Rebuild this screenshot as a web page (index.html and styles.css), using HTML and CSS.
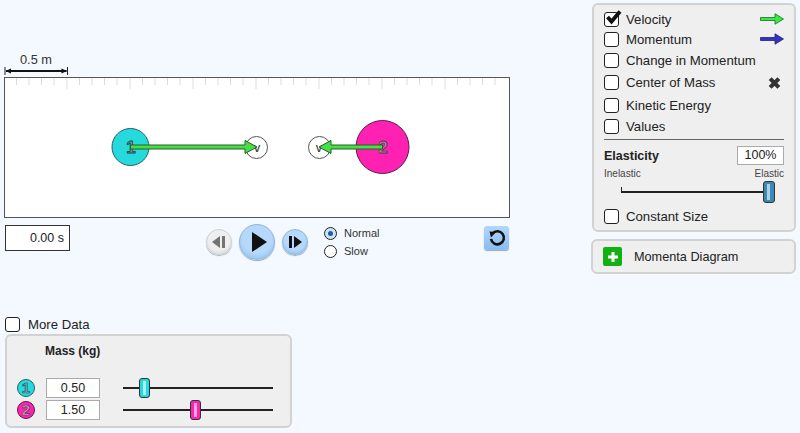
FILE: index.html
```html
<!DOCTYPE html>
<html lang="en">
<head>
<meta charset="utf-8">
<title>Collision Lab</title>
<link rel="stylesheet" href="styles.css">
</head>
<body>
<div class="app">
  <main class="left">
    <div class="scale">
      <span class="scale-label">0.5 m</span>
      <svg class="scale-bar" width="66" height="10" viewBox="0 0 66 10">
        <path d="M1 1V9M63.500 1V9" stroke="#222" stroke-width="1" fill="none"/>
        <path d="M2 5H62.500" stroke="#111" stroke-width="2" fill="none"/>
        <path d="M1.500 5L7 2.500V7.500ZM63 5L57.500 2.500V7.500Z" fill="#111"/>
      </svg>
    </div>
    <svg class="stage" width="506" height="141" viewBox="0 0 506 141">
      <rect x="0.500" y="0.500" width="505" height="140" fill="#fff" stroke="#555"/>
      <path id="ticks" stroke="#ddd" fill="none" d="M12.500 1V8M25 1V8M37.500 1V8M50 1V8M63 1V12M75.500 1V8M88 1V8M100.500 1V8M113 1V8M126 1V12M138.500 1V8M151 1V8M163.500 1V8M176 1V8M189 1V12M201.500 1V8M214 1V8M226.500 1V8M239 1V8M252 1V12M264.500 1V8M277 1V8M289.500 1V8M302 1V8M315 1V12M327.500 1V8M340 1V8M352.500 1V8M365 1V8M378 1V12M390.500 1V8M403 1V8M415.500 1V8M428 1V8M441 1V12M453.500 1V8M466 1V8M478.500 1V8M491 1V8"/>
      <circle cx="126.500" cy="70" r="18.500" fill="#26d9dd" stroke="#24606a"/>
      <text class="ball-num ball-num-a" x="127" y="76">1</text>
      <circle cx="378.500" cy="70" r="26.500" fill="#ff22b2" stroke="#5e1a48"/>
      <text class="ball-num ball-num-b" x="379" y="76">2</text>
      <circle cx="252.500" cy="70.500" r="11" fill="#fff" stroke="#555"/>
      <text class="v-label" x="253" y="75">v</text>
      <circle cx="315.500" cy="70.500" r="11" fill="#fff" stroke="#555"/>
      <text class="v-label" x="315" y="75">v</text>
      <path d="M126.500 68H241V63.500L253 70L241 76.500V72H126.500Z" fill="#44e044" stroke="#2a5a2a" stroke-width="1"/>
      <path d="M378.500 68H327V63.500L315 70L327 76.500V72H378.500Z" fill="#44e044" stroke="#2a5a2a" stroke-width="1"/>
    </svg>
    <div class="controls-row">
      <output class="time">0.00 s</output>
      <div class="transport">
        <button class="round step disabled" aria-label="Step back">
          <svg width="14" height="12" viewBox="0 0 14 12"><path d="M8 0V12L0 6Z M10 0H13V12H10Z" fill="#666"/></svg>
        </button>
        <button class="round play" aria-label="Play">
          <svg width="16" height="20" viewBox="0 0 16 20"><path d="M1 0L16 10L1 20Z" fill="#111"/></svg>
        </button>
        <button class="round step" aria-label="Step forward">
          <svg width="14" height="12" viewBox="0 0 14 12"><path d="M1 0H4V12H1Z M6 0L14 6L6 12Z" fill="#111"/></svg>
        </button>
      </div>
      <div class="speed">
        <label class="radio-row"><span class="radio on"></span>Normal</label>
        <label class="radio-row"><span class="radio"></span>Slow</label>
      </div>
      <button class="reset" aria-label="Reset">
        <svg width="18" height="18" viewBox="0 0 18 18"><path d="M4.500 4.500A6.500 6.500 0 1 1 3 10" fill="none" stroke="#111" stroke-width="2.600"/><path d="M1.500 2.500L8 3L3 8.500Z" fill="#111"/></svg>
      </button>
    </div>
    <label class="check-row more-data"><span class="box"></span>More Data</label>
    <section class="panel mass-panel">
      <div class="mass-title">Mass (kg)</div>
      <div class="mass-rows">
        <div class="mass-row">
          <svg class="badge" width="20" height="20" viewBox="0 0 20 20"><circle cx="10" cy="10" r="8.500" fill="#26d9dd" stroke="#24606a"/><text class="badge-num badge-a" x="10" y="15">1</text></svg>
          <output class="value mass-value">0.50</output>
          <div class="slider mass-slider"><span class="thumb thumb-a thumb-m1"></span></div>
        </div>
        <div class="mass-row">
          <svg class="badge" width="20" height="20" viewBox="0 0 20 20"><circle cx="10" cy="10" r="8.500" fill="#ff22b2" stroke="#5e1a48"/><text class="badge-num badge-b" x="10" y="15">2</text></svg>
          <output class="value mass-value">1.50</output>
          <div class="slider mass-slider"><span class="thumb thumb-b thumb-m2"></span></div>
        </div>
      </div>
    </section>
  </main>
  <aside class="side">
    <section class="panel options">
      <label class="check-row opt opt-1"><span class="box checked"><svg width="17" height="15" viewBox="0 0 17 15"><path d="M2.500 7L6.500 11.500L15 1.500" fill="none" stroke="#111" stroke-width="3.800"/></svg></span>Velocity
        <svg class="opt-icon" width="24" height="12" viewBox="0 0 24 12"><path d="M0.500 4.500H15V0.800L23.500 6L15 11.200V7.500H0.500Z" fill="#33ee44" stroke="#226622" stroke-width="0.800"/></svg></label>
      <label class="check-row opt opt-2"><span class="box"></span>Momentum
        <svg class="opt-icon" width="24" height="12" viewBox="0 0 24 12"><path d="M0.500 4.500H15V0.800L23.500 6L15 11.200V7.500H0.500Z" fill="#3333cc" stroke="#222266" stroke-width="0.800"/></svg></label>
      <label class="check-row opt opt-3"><span class="box"></span>Change in Momentum</label>
      <label class="check-row opt opt-4"><span class="box"></span>Center of Mass
        <svg class="opt-icon opt-x" width="13" height="13" viewBox="0 0 12 12"><path d="M2 2L10 10M10 2L2 10" stroke="#333" stroke-width="3.800" fill="none"/></svg></label>
      <label class="check-row opt opt-5"><span class="box"></span>Kinetic Energy</label>
      <label class="check-row opt opt-6"><span class="box"></span>Values</label>
      <hr class="rule">
      <div class="elastic-head"><strong>Elasticity</strong><output class="value pct">100%</output></div>
      <div class="elastic-labels"><span>Inelastic</span><span>Elastic</span></div>
      <div class="slider el-slider"><span class="end-tick"></span><span class="thumb thumb-el"></span></div>
      <label class="check-row const"><span class="box"></span>Constant Size</label>
    </section>
    <section class="panel diagram">
      <span class="plus"><svg width="12" height="12" viewBox="0 0 12 12"><path d="M6 1V11M1 6H11" stroke="#fff" stroke-width="3"/></svg></span>
      <span class="diagram-label">Momenta Diagram</span>
    </section>
  </aside>
</div>
</body>
</html>
```
FILE: styles.css
```css
* { box-sizing: border-box; }
html, body { margin: 0; height: 100%; }
body {
  background: #f4f9ff;
  color: #222;
  font-family: "Liberation Sans", Arial, sans-serif;
  font-size: 13.2px;
  overflow: hidden;
}
button { padding: 0; border: 0; font: inherit; }
.app {
  display: flex;
  justify-content: space-between;
  width: 800px;
  height: 433px;
  padding: 0 4px 0 4px;
}
.left { width: 506px; padding-top: 52px; }
.scale {
  display: flex;
  flex-direction: column;
  height: 25px;
  width: 66px;
}
.scale-label { width: 64px; text-align: center; font-size: 12.800px; line-height: 14px; margin-top: 1px; margin-bottom: -1px; color: #333; }
.scale-bar { display: block; margin-top: 0; }
.stage { display: block; }
.ball-num { font-size: 17px; font-weight: bold; text-anchor: middle; stroke-width: 0.8px; }
.ball-num-a { fill: #6a9fa8; stroke: #244; }
.ball-num-b { fill: #d77ab5; stroke: #444; }
.v-label { font-size: 13px; text-anchor: middle; fill: #333; }
.controls-row {
  position: relative;
  display: flex;
  align-items: flex-start;
  height: 92px;
  padding-top: 7px;
}
.time {
  width: 65px;
  height: 26px;
  padding-right: 5px;
  margin-left: 1px;
  border: 1px solid #333;
  background: #fff;
  font-size: 12.500px;
  line-height: 24px;
  text-align: right;
}
.transport { display: flex; align-items: center; gap: 7px; margin-left: 136px; margin-top: -1px; }
.round {
  display: flex;
  align-items: center;
  justify-content: center;
  border-radius: 50%;
  background: radial-gradient(circle at 50% 40%, #b5d8fb 0 55%, #7fb4ea 100%);
  border: 1px solid #8fb6dc;
  box-shadow: 0 1px 1px #9ab;
}
.step { width: 26px; height: 26px; }
.play { width: 36px; height: 36px; padding-left: 3px; }
.disabled { background: radial-gradient(circle at 50% 40%, #eee 0 55%, #ccc 100%); border-color: #ccc; opacity: 0.9; }
.speed { display: flex; flex-direction: column; gap: 4px; margin-left: 16px; margin-top: 1px; font-size: 11px; }
.radio-row { display: flex; align-items: center; gap: 7px; height: 14px; color: #333; }
.radio { position: relative; width: 13px; height: 13px; border: 1px solid #222; border-radius: 50%; background: #fff; }
.radio.on { background: #cfe3f8; }
.radio.on::after {
  content: "";
  position: absolute;
  inset: 3px;
  border-radius: 50%;
  background: #1f5f9f;
}
.reset {
  display: flex;
  align-items: center;
  justify-content: center;
  width: 25px;
  height: 24px;
  margin-left: auto;
  margin-right: 1px;
  margin-top: 1px;
  border-radius: 3px;
  background: linear-gradient(#b3d6fa, #88bcf0);
  box-shadow: 0 1px 1px #9ab;
}
.check-row { display: flex; align-items: center; }
.box {
  display: block;
  position: relative;
  flex: none;
  width: 15px;
  height: 15px;
  margin-right: 7px;
  border: 1px solid #222;
  border-radius: 3px;
  background: #fff;
}
.box svg { position: absolute; left: 0; top: -3px; }
.more-data { margin-top: 6px; margin-left: 1px; height: 16px; }
.more-data .box { margin-right: 8px; }
.panel {
  background: #efefef;
  border: 2px solid #d2d2d2;
  border-radius: 6px;
}
.mass-panel { width: 287px; height: 94px; margin-top: 2px; margin-left: 1px; }
.mass-title { margin-left: 38px; margin-top: 8px; font-size: 12px; font-weight: bold; color: #222; line-height: 14px; }
.mass-rows { display: flex; flex-direction: column; gap: 2px; margin-top: 20px; }
.mass-row { display: flex; align-items: center; height: 20px; }
.badge { margin-left: 9px; display: block; }
.badge-num { font-size: 15px; font-weight: bold; text-anchor: middle; stroke-width: 0.6px; }
.badge-a { fill: #6fb5bd; stroke: #244; }
.badge-b { fill: #e59bca; stroke: #444; }
.value { display: block; border: 1px solid #aaa; background: #fff; text-align: center; }
.mass-value { width: 54px; height: 20px; margin-left: 10px; font-size: 12.500px; line-height: 18px; }
.slider { position: relative; height: 2px; background: #222; }
.mass-slider { width: 150px; margin-left: 23px; }
.thumb {
  position: absolute;
  top: -9px;
  width: 11px;
  height: 20px;
  border: 1px solid #333;
  border-radius: 3px;
}
.thumb::after {
  content: "";
  position: absolute;
  left: 3px;
  top: 2px;
  bottom: 2px;
  width: 3px;
  background: rgba(255, 255, 255, 0.6);
}
.thumb-a { background: #26d9dd; }
.thumb-b { background: #ff22b2; }
.thumb-m1 { left: 16px; }
.thumb-m2 { left: 67px; }
.side { width: 206px; padding-top: 3px; }
.options { width: 204px; height: 229px; margin-left: 2px; padding: 4px 10px 0 10px; }
.opt { position: relative; }
.opt-1 { height: 20px; }
.opt-2 { height: 20px; }
.opt-3 { height: 22px; }
.opt-4 { height: 23px; }
.opt-5 { height: 22px; }
.opt-6 { height: 20px; }
.opt-icon { position: absolute; right: 0; top: 50%; transform: translateY(-50%); }
.opt-x { right: 3px; }
.rule { height: 1px; margin: 3px 0 0; border: 0; background: #666; }
.elastic-head { display: flex; justify-content: space-between; align-items: center; margin-top: 6px; height: 19px; }
.elastic-head strong { font-size: 12.500px; }
.pct { width: 47px; height: 19px; font-size: 12.500px; line-height: 17px; }
.elastic-labels { display: flex; justify-content: space-between; margin-top: 3px; font-size: 10px; line-height: 12px; color: #444; }
.el-slider { width: 148px; margin: 11px 0 0 17px; }
.end-tick { position: absolute; left: 0; bottom: 0; width: 1px; height: 6px; background: #222; }
.thumb-el { left: 142px; width: 12px; background: #3b8ab5; top: -10px; height: 22px; }
.const { margin-top: 16px; }
.diagram {
  display: flex;
  align-items: center;
  width: 205px;
  height: 35px;
  margin-top: 7px;
  margin-left: 1px;
  padding-left: 10px;
}
.diagram-label { font-size: 12.700px; }
.plus {
  display: flex;
  align-items: center;
  justify-content: center;
  width: 19px;
  height: 19px;
  margin-right: 12px;
  border-radius: 2px;
  background: #12b012;
}
```
